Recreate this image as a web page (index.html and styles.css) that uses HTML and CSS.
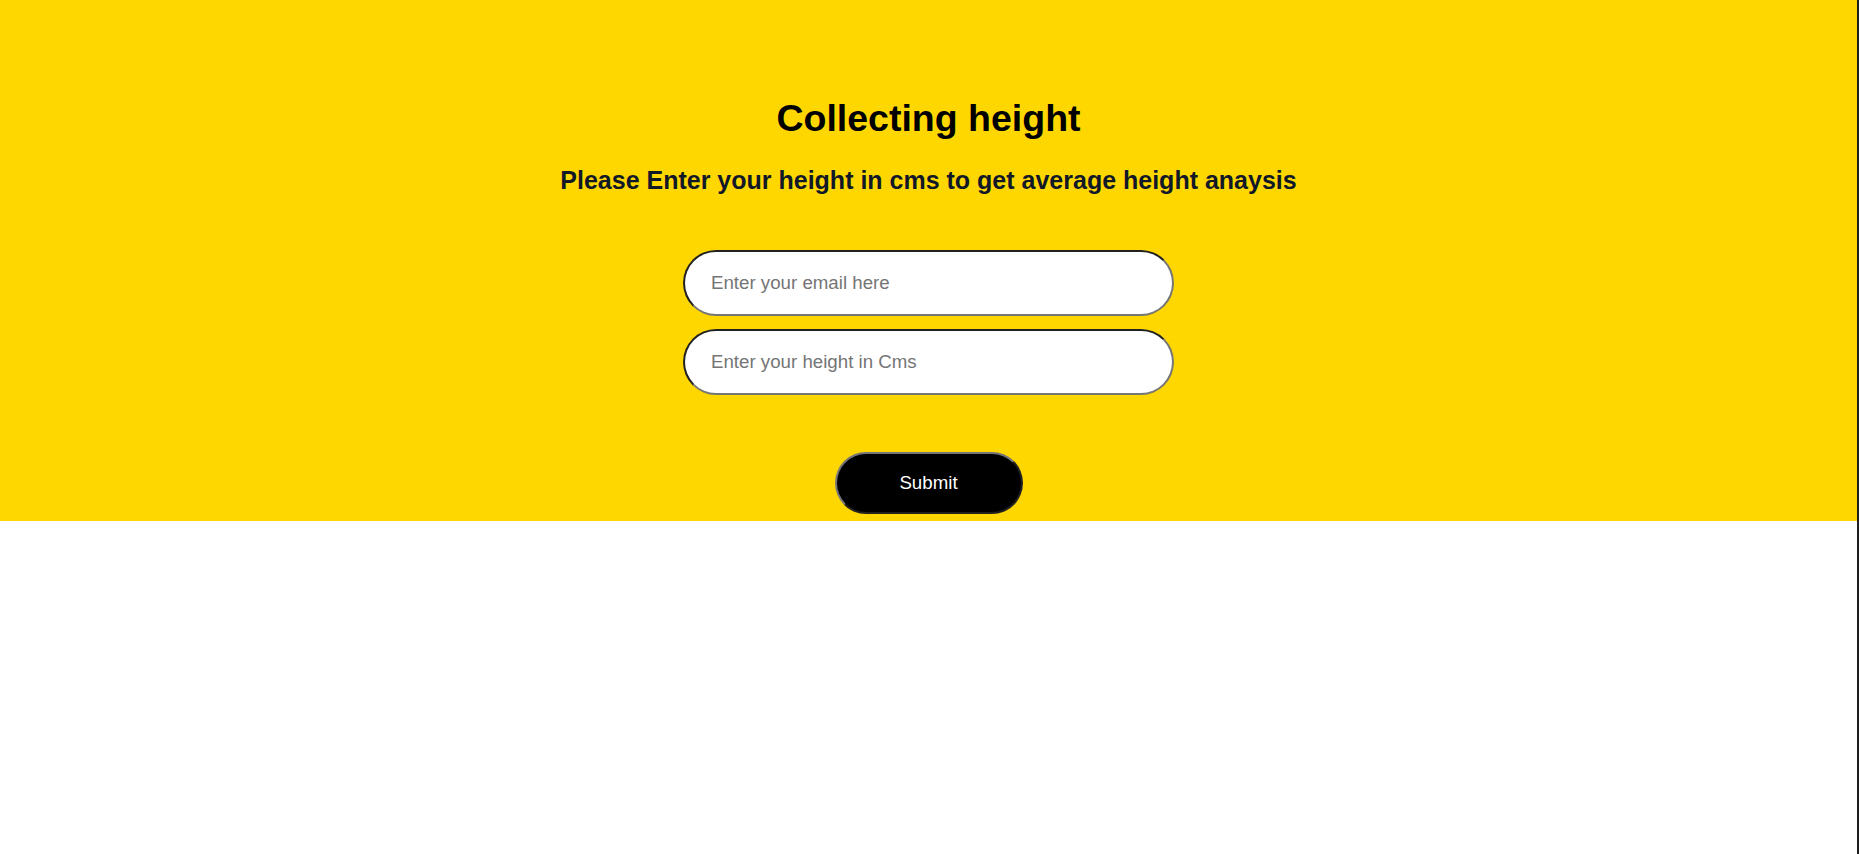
FILE: index.html
```html
<!DOCTYPE html>
<html lang="en">
<head>
<meta charset="utf-8">
<title>Collecting height</title>
<link rel="stylesheet" href="styles.css">
</head>
<body>
<div class="page">
  <section class="hero">
    <h1 class="title">Collecting height</h1>
    <h3 class="subtitle">Please Enter your height in cms to get average height anaysis</h3>
    <form class="form">
      <div class="fields">
        <input class="field" type="email" placeholder="Enter your email here">
        <input class="field" type="text" placeholder="Enter your height in Cms">
      </div>
      <button class="submit" type="button">Submit</button>
    </form>
  </section>
</div>
</body>
</html>
```
FILE: styles.css
```css
html, body {
  margin: 0;
  padding: 0;
  background: #ffffff;
}
body {
  font-family: "Liberation Sans", Arial, sans-serif;
}
.page {
  min-height: 100vh;
  border-right: 2px solid #1e1e1e;
  box-sizing: border-box;
}
.hero {
  background: #ffd700;
  height: 521px;
  box-sizing: border-box;
  padding-top: 97px;
  display: flex;
  flex-direction: column;
  align-items: center;
}
.title {
  margin: 0;
  font-size: 37.5px;
  line-height: 43px;
  font-weight: 700;
  color: #000;
}
.subtitle {
  margin: 26px 0 0;
  font-size: 25px;
  line-height: 29px;
  font-weight: 700;
  color: #111827;
}
.form {
  margin-top: 55px;
  display: flex;
  flex-direction: column;
  align-items: center;
}
.fields {
  display: flex;
  flex-direction: column;
  gap: 13px;
}
.field {
  width: 491px;
  height: 66px;
  box-sizing: border-box;
  border: 2px inset #767676;
  border-radius: 33px;
  padding: 0 26px;
  font-family: "Liberation Sans", Arial, sans-serif;
  font-size: 18.7px;
  color: #000;
  background: #fff;
  outline: none;
}
.field::placeholder {
  color: #757575;
}
.submit {
  margin-top: 57px;
  width: 188px;
  height: 62px;
  box-sizing: border-box;
  border: 2px outset #767676;
  border-radius: 31px;
  background: #000;
  color: #fff;
  font-family: "Liberation Sans", Arial, sans-serif;
  font-size: 18.7px;
}
```
